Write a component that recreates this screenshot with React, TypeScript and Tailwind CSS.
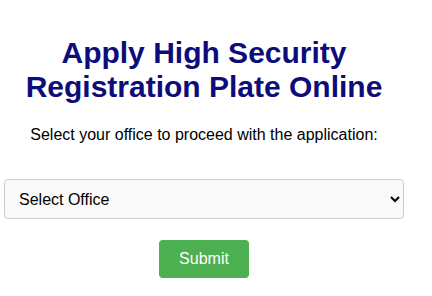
export default function App() {
  return (
    <div className="min-h-[296px] w-[432px] bg-white" style={{ fontFamily: '"Liberation Sans", Arial, sans-serif' }}>
      <div className="flex w-[408px] flex-col items-center px-1 pt-[36px] text-center">
        <h1 className="text-[30px] font-bold leading-[34px] text-[#0c0c7a]">
          Apply High Security
          <br />
          Registration Plate Online
        </h1>
        <p className="mt-[22px] text-base leading-[18px] text-black">
          Select your office to proceed with the application:
        </p>
        <select
          defaultValue=""
          className="mt-[35px] h-[40px] w-full rounded border border-[#ccc] bg-[#f9f9f9] px-2.5 text-base text-black"
        >
          <option value="">Select Office</option>
        </select>
        <button
          type="button"
          className="mt-[21px] rounded bg-[#4caf50] px-5 py-2.5 text-base leading-[18px] text-white"
        >
          Submit
        </button>
      </div>
    </div>
  );
}
